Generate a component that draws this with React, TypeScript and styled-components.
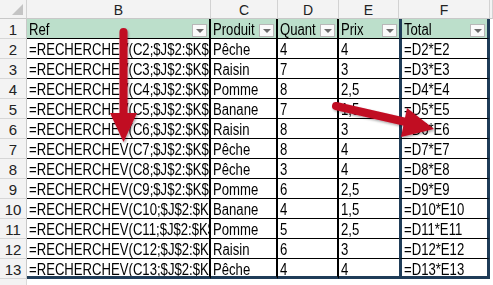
import styled, { createGlobalStyle } from "styled-components";

const GlobalStyle = createGlobalStyle`
  html, body {
    margin: 0;
    padding: 0;
    background: #ffffff;
  }
`;

const Sheet = styled.div`
  position: relative;
  width: 493px;
  height: 285px;
  overflow: hidden;
  background: #ffffff;
  display: grid;
  grid-template-columns: 27px 184px 67px 61px 60px 91px 1fr;
  grid-template-rows: 19px repeat(13, 20px) 1fr;
  font-family: "Liberation Sans", Arial, sans-serif;
  font-size: 16px;
  color: #000;
`;

const Corner = styled.div`
  position: relative;
  background: #f3f3f3;
  border-right: 1px solid #d2d2d2;
  border-bottom: 1px solid #c8c8c8;
  box-sizing: border-box;

  &::after {
    content: "";
    position: absolute;
    right: 3px;
    bottom: 3px;
    border-style: solid;
    border-width: 0 0 11px 11px;
    border-color: transparent transparent #c4c4c4 transparent;
  }
`;

const ColHead = styled.div`
  background: #f3f3f3;
  border-right: 1px solid #d2d2d2;
  border-bottom: 1px solid #c8c8c8;
  box-sizing: border-box;
  display: flex;
  align-items: center;
  justify-content: center;
  font-size: 14px;
  color: #222;
  padding-top: 1px;
`;

const RowHead = styled.div`
  background: #f3f3f3;
  border-right: 1px solid #c8c8c8;
  border-bottom: 1px solid #d6d6d6;
  box-sizing: border-box;
  display: flex;
  align-items: center;
  justify-content: center;
  font-size: 15px;
  color: #222;
  padding-top: 1px;
`;

const Filler = styled.div`
  background: #f3f3f3;
  border-right: 1px solid #dadada;
  box-sizing: border-box;
`;

const Cell = styled.div<{
  $head?: boolean;
  $col: string;
  $last?: boolean;
}>`
  position: relative;
  box-sizing: border-box;
  background: ${(p) => (p.$head ? "#bcdfcb" : "#ffffff")};
  border-bottom: ${(p) => (p.$last ? "3px solid #1f3c58" : "1px solid #000")};
  border-right: ${(p) =>
    p.$col === "F"
      ? "3px solid #1f3c58"
      : p.$col === "E"
      ? "none"
      : "2px solid #000"};
  border-left: ${(p) => (p.$col === "F" ? "3px solid #1f3c58" : "none")};
  padding: 1px 0 0 2px;
  line-height: 19px;
  white-space: nowrap;
  overflow: hidden;
`;

// narrow face (Excel "Aptos Narrow" look) squeezed from Liberation Sans
const Txt = styled.span`
  display: inline-block;
  transform: scaleX(0.82);
  transform-origin: left center;
`;

const Arrow = styled.span`
  position: absolute;
  right: 2px;
  top: 5px;
  width: 15px;
  height: 13px;
  box-sizing: border-box;
  background: #fafafa;
  border: 1px solid #b8b8b8;
  display: flex;
  align-items: center;
  justify-content: center;

  &::after {
    content: "";
    border-style: solid;
    border-width: 4px 4px 0 4px;
    border-color: #6b6b6b transparent transparent transparent;
  }
`;

const Overlay = styled.svg`
  position: absolute;
  left: 0;
  top: 0;
  width: 493px;
  height: 285px;
  pointer-events: none;
`;

type Row = { produit: string; quant: string; prix: string };

const rows: Row[] = [
  { produit: "Pêche", quant: "4", prix: "4" },
  { produit: "Raisin", quant: "7", prix: "3" },
  { produit: "Pomme", quant: "8", prix: "2,5" },
  { produit: "Banane", quant: "7", prix: "1,5" },
  { produit: "Raisin", quant: "8", prix: "3" },
  { produit: "Pêche", quant: "8", prix: "4" },
  { produit: "Pêche", quant: "3", prix: "4" },
  { produit: "Pomme", quant: "6", prix: "2,5" },
  { produit: "Banane", quant: "4", prix: "1,5" },
  { produit: "Pomme", quant: "5", prix: "2,5" },
  { produit: "Raisin", quant: "6", prix: "3" },
  { produit: "Pêche", quant: "4", prix: "4" },
];

const letters = ["B", "C", "D", "E", "F"];
const headers = ["Ref", "Produit", "Quant", "Prix", "Total"];

export default function App() {
  return (
    <>
      <GlobalStyle />
      <Sheet>
        <Corner />
        {letters.map((l) => (
          <ColHead key={l}>{l}</ColHead>
        ))}
        <ColHead />

        <RowHead>1</RowHead>
        {headers.map((h, i) => (
          <Cell key={h} $head $col={letters[i]}>
            <Txt>{h}</Txt>
            <Arrow />
          </Cell>
        ))}
        <div />

        {rows.map((r, i) => {
          const n = i + 2;
          const last = n === 13;
          return [
            <RowHead key={`h${n}`}>{n}</RowHead>,
            <Cell key={`b${n}`} $col="B" $last={last}>
              <Txt>=RECHERCHEV(C{n};$J$2:$K$6;2;FAUX)</Txt>
            </Cell>,
            <Cell key={`c${n}`} $col="C" $last={last}>
              <Txt>{r.produit}</Txt>
            </Cell>,
            <Cell key={`d${n}`} $col="D" $last={last}>
              <Txt>{r.quant}</Txt>
            </Cell>,
            <Cell key={`e${n}`} $col="E" $last={last}>
              <Txt>{r.prix}</Txt>
            </Cell>,
            <Cell key={`f${n}`} $col="F" $last={last}>
              <Txt>=D{n}*E{n}</Txt>
            </Cell>,
            <div key={`g${n}`} />,
          ];
        })}

        <Filler />
        <div />
        <div />
        <div />
        <div />
        <div />
        <div />

        <Overlay viewBox="0 0 493 285">
          <defs>
            <filter id="sh" x="-20%" y="-20%" width="140%" height="140%">
              <feDropShadow dx="1" dy="1.5" stdDeviation="1.2" floodOpacity="0.35" />
            </filter>
          </defs>
          <g filter="url(#sh)" fill="#c10a24">
            <line x1="123.5" y1="32" x2="123.5" y2="116" stroke="#c10a24" strokeWidth="8" strokeLinecap="round" />
            <polygon points="110,113 137,113 123.5,142" />
            <line x1="336" y1="106" x2="406" y2="122" stroke="#c10a24" strokeWidth="8" strokeLinecap="round" />
            <polygon points="407,108 401,137 434,129" />
          </g>
        </Overlay>
      </Sheet>
    </>
  );
}
